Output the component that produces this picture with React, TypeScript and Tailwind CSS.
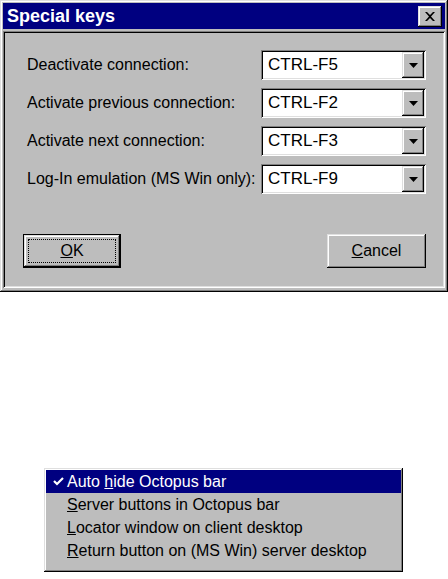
import React from "react";

const raised =
  "shadow-[inset_-1px_-1px_#000,inset_1px_1px_#dfdfdf,inset_-2px_-2px_#808080,inset_2px_2px_#fff]";
const sunken =
  "shadow-[inset_1px_1px_#808080,inset_-1px_-1px_#fff,inset_2px_2px_#000,inset_-2px_-2px_#dfdfdf]";

const rows = [
  { label: "Deactivate connection:", value: "CTRL-F5" },
  { label: "Activate previous connection:", value: "CTRL-F2" },
  { label: "Activate next connection:", value: "CTRL-F3" },
  { label: "Log-In emulation (MS Win only):", value: "CTRL-F9" },
];

function Combo({ value }: { value: string }) {
  return (
    <div className={`shrink-0 w-[165px] h-[30px] bg-white flex items-center p-[2px] ${sunken}`}>
      <span className="flex-1 pl-[5px] text-black text-[17px]">{value}</span>
      <div className={`w-[22px] h-[26px] bg-[#bdbdbd] flex items-center justify-center ${raised}`}>
        <svg width="9" height="5" viewBox="0 0 9 5">
          <path d="M0 0h9L4.5 5z" fill="#000" />
        </svg>
      </div>
    </div>
  );
}

export default function App() {
  return (
    <div
      className="w-[448px] h-[579px] bg-white overflow-hidden"
      style={{ fontFamily: '"Liberation Sans", Arial, sans-serif' }}
    >
      <div className={`w-[448px] h-[292px] bg-[#bdbdbd] p-[3px] flex flex-col ${raised}`}>
        <div className="h-[26px] bg-[#000080] flex items-center justify-between pl-[4px] pr-[3px]">
          <span className="text-white font-bold text-[18px] leading-none">Special keys</span>
          <div className={`w-[24px] h-[21px] bg-[#bdbdbd] flex items-center justify-center ${raised}`}>
            <svg width="10" height="9" viewBox="0 0 10 9">
              <path d="M0 0h2l3 3 3-3h2L6 4.5 10 9H8L5 6 2 9H0l4-4.5z" fill="#000" />
            </svg>
          </div>
        </div>
        <div className={`mt-[2px] h-[257px] flex flex-col pt-[19px] pl-[24px] pr-[19px] pb-[20px] text-[16px] ${sunken}`}>
          <div className="flex flex-col gap-[8px]">
            {rows.map((r) => (
              <div key={r.label} className="flex items-center justify-between">
                <span className="text-black leading-none whitespace-nowrap">{r.label}</span>
                <Combo value={r.value} />
              </div>
            ))}
          </div>
          <div className="mt-auto flex justify-between">
            <div className="-ml-[4px] w-[98px] h-[34px] bg-black p-[1px]">
              <div className={`w-full h-full bg-[#bdbdbd] p-[4px] ${raised}`}>
                <div className="w-full h-full border border-dotted border-black flex items-center justify-center">
                  <span className="text-black leading-none">
                    <span className="underline">O</span>K
                  </span>
                </div>
              </div>
            </div>
            <div className={`w-[99px] h-[34px] bg-[#bdbdbd] flex items-center justify-center ${raised}`}>
              <span className="text-black leading-none">
                <span className="underline">C</span>ancel
              </span>
            </div>
          </div>
        </div>
      </div>

      <div
        className={`ml-[44px] mt-[176px] w-[359px] h-[104px] bg-[#bdbdbd] p-[2px] text-[16px] ${raised}`}
      >
        <div className="h-[23px] bg-[#000080] text-white flex items-center">
          <span className="w-[21px] flex justify-center pl-[3px]">
            <svg width="11" height="9" viewBox="0 0 11 9">
              <path d="M1 4l3 3 6-6" stroke="#fff" strokeWidth="2.2" fill="none" />
            </svg>
          </span>
          <span className="leading-none">
            Auto <span className="underline">h</span>ide Octopus bar
          </span>
        </div>
        <div className="h-[23px] flex items-center pl-[21px] text-black">
          <span className="leading-none">
            <span className="underline">S</span>erver buttons in Octopus bar
          </span>
        </div>
        <div className="h-[23px] flex items-center pl-[21px] text-black">
          <span className="leading-none">
            <span className="underline">L</span>ocator window on client desktop
          </span>
        </div>
        <div className="h-[23px] flex items-center pl-[21px] text-black">
          <span className="leading-none">
            <span className="underline">R</span>eturn button on (MS Win) server desktop
          </span>
        </div>
      </div>
    </div>
  );
}
